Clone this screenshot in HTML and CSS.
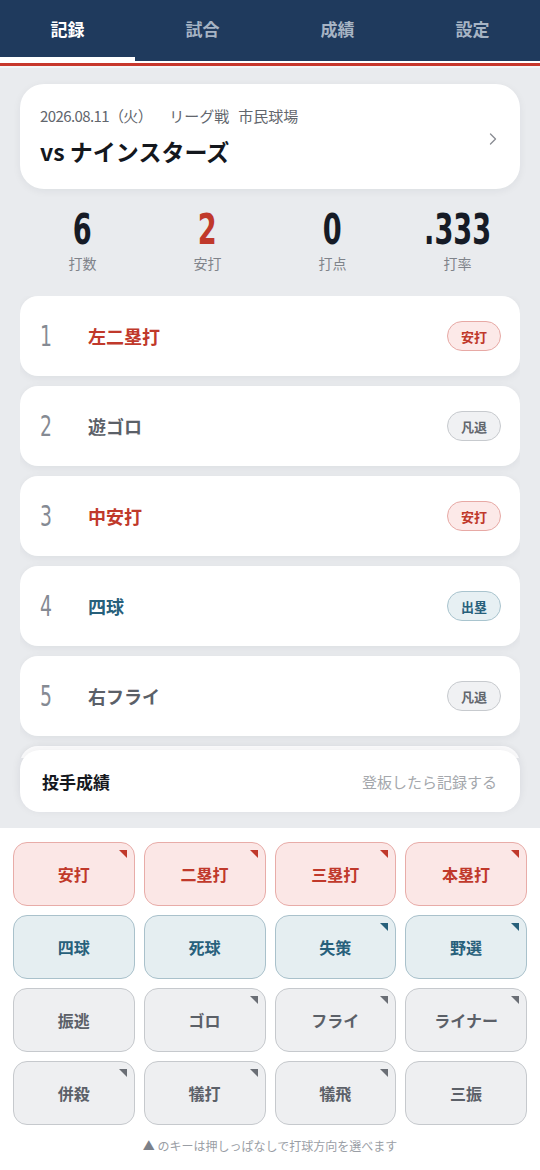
FILE: index.html
```html
<!DOCTYPE html>
<html lang="ja">
<head>
    <meta charset="UTF-8">
    <meta name="viewport" content="width=device-width, initial-scale=1.0">
    <title>打撃記録</title>
    <link rel="stylesheet" href="styles.css">
</head>
<body>
    <div class="app">
        <nav class="tabs">
            <div class="tab active">記録</div>
            <div class="tab">試合</div>
            <div class="tab">成績</div>
            <div class="tab">設定</div>
        </nav>
        <div class="stripe"></div>

        <main class="content">
            <section class="game-card">
                <div class="game-info">
                    <div class="game-meta">
                        <span class="game-date">2026.08.11（火）</span>
                        <span>リーグ戦</span>
                        <span>市民球場</span>
                    </div>
                    <div class="game-title">vs ナインスターズ</div>
                </div>
                <svg class="chevron" width="8" height="12" viewBox="0 0 8 12">
                    <polyline points="1.5,1 6.5,6 1.5,11" fill="none" stroke="#8a8d93" stroke-width="1.4" stroke-linecap="round" stroke-linejoin="round"/>
                </svg>
            </section>

            <div class="stats">
                <div class="stat"><span class="stat-num">6</span><span class="stat-label">打数</span></div>
                <div class="stat"><span class="stat-num hit">2</span><span class="stat-label">安打</span></div>
                <div class="stat"><span class="stat-num">0</span><span class="stat-label">打点</span></div>
                <div class="stat"><span class="stat-num">.333</span><span class="stat-label">打率</span></div>
            </div>

            <ul class="atbats">
                <li class="atbat"><span class="ab-num">1</span><span class="ab-text hit">左二塁打</span><span class="badge hit">安打</span></li>
                <li class="atbat"><span class="ab-num">2</span><span class="ab-text out">遊ゴロ</span><span class="badge out">凡退</span></li>
                <li class="atbat"><span class="ab-num">3</span><span class="ab-text hit">中安打</span><span class="badge hit">安打</span></li>
                <li class="atbat"><span class="ab-num">4</span><span class="ab-text walk">四球</span><span class="badge walk">出塁</span></li>
                <li class="atbat"><span class="ab-num">5</span><span class="ab-text out">右フライ</span><span class="badge out">凡退</span></li>
                <li class="atbat"></li>
            </ul>

            <section class="pitcher">
                <span class="pitcher-title">投手成績</span>
                <span class="pitcher-note">登板したら記録する</span>
            </section>
        </main>

        <section class="keypad">
            <div class="keys">
                <button class="key hit dir">安打</button>
                <button class="key hit dir">二塁打</button>
                <button class="key hit dir">三塁打</button>
                <button class="key hit dir">本塁打</button>
                <button class="key walk">四球</button>
                <button class="key walk">死球</button>
                <button class="key walk dir">失策</button>
                <button class="key walk dir">野選</button>
                <button class="key out">振逃</button>
                <button class="key out dir">ゴロ</button>
                <button class="key out dir">フライ</button>
                <button class="key out dir">ライナー</button>
                <button class="key out dir">併殺</button>
                <button class="key out dir">犠打</button>
                <button class="key out dir">犠飛</button>
                <button class="key out">三振</button>
            </div>
            <p class="hint"><span class="hint-mark">▲</span> のキーは押しっぱなしで打球方向を選べます</p>
        </section>
    </div>
</body>
</html>
```

FILE: styles.css
```css
body {
    margin: 0;
    font-family: "Noto Sans CJK JP", "Noto Sans", sans-serif;
    background-color: #e9ebee;
    color: #1a1d24;
}
.app {
    width: 540px;
    height: 1170px;
    display: flex;
    flex-direction: column;
    overflow: hidden;
}

/* top tabs */
.tabs {
    height: 61px;
    display: flex;
    background-color: #1f3a5d;
}
.tab {
    flex: 1;
    display: flex;
    align-items: center;
    justify-content: center;
    padding-bottom: 4px;
    box-sizing: border-box;
    font-size: 17px;
    font-weight: bold;
    color: #a7b4c4;
}
.tab.active {
    color: #fff;
    border-bottom: 4px solid #fff;
    padding-bottom: 0;
}
.stripe {
    height: 3px;
    background-color: #c7372c;
    border-top: 2px solid #fff;
    border-bottom: 2px solid #f4f5f7;
}

/* main scroll area */
.content {
    flex: 1;
    padding: 16px 20px 16px;
    display: flex;
    flex-direction: column;
}
.game-card {
    height: 105px;
    box-sizing: border-box;
    background-color: #fff;
    border-radius: 24px;
    box-shadow: 0 2px 8px rgba(20, 30, 50, 0.06);
    padding: 22px 23px 0 20px;
    display: flex;
    align-items: center;
}
.game-info {
    flex: 1;
    align-self: flex-start;
}
.game-meta {
    font-size: 15px;
    line-height: 20px;
    color: #62666d;
    display: flex;
    gap: 9px;
}
.game-date {
    letter-spacing: -0.6px;
    margin-right: 8px;
}
.game-title {
    margin-top: 10px;
    font-size: 23px;
    line-height: 30px;
    font-weight: bold;
    color: #14171d;
}
.chevron {
    margin-top: -18px;
}

.stats {
    margin-top: 17px;
    margin-bottom: 24px;
    display: grid;
    grid-template-columns: repeat(4, 1fr);
}
.stat {
    display: flex;
    flex-direction: column;
    align-items: center;
}
.stat-num {
    display: inline-block;
    font-family: "DejaVu Sans Condensed", "DejaVu Sans", sans-serif;
    font-weight: bold;
    font-size: 42px;
    line-height: 48px;
    color: #161b26;
    transform: scaleX(0.72);
}
.stat-num.hit {
    color: #c0392b;
}
.stat-label {
    font-size: 14px;
    line-height: 18px;
    color: #7f838a;
}

/* at-bat list */
.atbats {
    list-style: none;
    margin: 0;
    padding: 0;
    height: 462px;
    overflow: hidden;
    display: flex;
    flex-direction: column;
    gap: 10px;
}
.atbat {
    flex: none;
    height: 80px;
    box-sizing: border-box;
    background-color: #fff;
    border-radius: 18px;
    box-shadow: 0 2px 8px rgba(20, 30, 50, 0.06);
    display: flex;
    align-items: center;
    padding: 0 19px 0 20px;
}
.ab-num {
    width: 48px;
    font-family: "DejaVu Sans Condensed", "DejaVu Sans", sans-serif;
    font-size: 29px;
    color: #858a93;
    transform: scaleX(0.72);
    transform-origin: left center;
}
.ab-text {
    flex: 1;
    font-size: 18px;
    font-weight: 600;
}
.ab-text.hit { color: #c0392b; }
.ab-text.out { color: #5b6068; }
.ab-text.walk { color: #27607b; }
.badge {
    width: 54px;
    height: 30px;
    box-sizing: border-box;
    border-radius: 15px;
    border: 1px solid;
    display: flex;
    align-items: center;
    justify-content: center;
    font-size: 13px;
    font-weight: bold;
}
.badge.hit {
    background-color: #fce9e8;
    border-color: #e7a9a5;
    color: #c0392b;
}
.badge.out {
    background-color: #f0f1f3;
    border-color: #c7cace;
    color: #62666d;
}
.badge.walk {
    background-color: #e7f0f3;
    border-color: #a9c4ce;
    color: #27607b;
}

.pitcher {
    margin-top: -8px;
    height: 62px;
    box-sizing: border-box;
    background-color: #fff;
    border-radius: 20px;
    box-shadow: 0 -2px 10px rgba(20, 30, 50, 0.08);
    display: flex;
    align-items: center;
    justify-content: space-between;
    padding: 0 23px 0 22px;
    position: relative;
}
.pitcher-title {
    font-size: 17px;
    font-weight: bold;
    color: #15181e;
}
.pitcher-note {
    font-size: 15px;
    color: #a4a7ac;
}

/* input keypad */
.keypad {
    height: 342px;
    flex: none;
    box-sizing: border-box;
    background-color: #fff;
    padding: 14px 13px 0;
}
.keys {
    display: grid;
    grid-template-columns: repeat(4, 1fr);
    grid-auto-rows: 64px;
    gap: 9px;
}
.key {
    position: relative;
    border-radius: 14px;
    border: 1.5px solid;
    font-family: inherit;
    font-size: 16px;
    font-weight: bold;
    padding: 0;
}
.key.hit {
    background-color: #fbe7e6;
    border-color: #e8aca8;
    color: #c0392b;
}
.key.walk {
    background-color: #e5eef1;
    border-color: #a9c1cb;
    color: #27607b;
}
.key.out {
    background-color: #eeeff1;
    border-color: #c6c9cd;
    color: #5b6068;
}
.key.dir::after {
    content: "";
    position: absolute;
    top: 7px;
    right: 7px;
    width: 0;
    height: 0;
    border-top: 8px solid currentColor;
    border-left: 8px solid transparent;
}
.key.out.dir::after {
    border-top-color: #6a6e75;
}
.hint {
    margin: 12px 0 0;
    text-align: center;
    font-size: 12px;
    line-height: 18px;
    color: #9a9ea5;
}
.hint-mark {
    color: #7b8089;
}
```
